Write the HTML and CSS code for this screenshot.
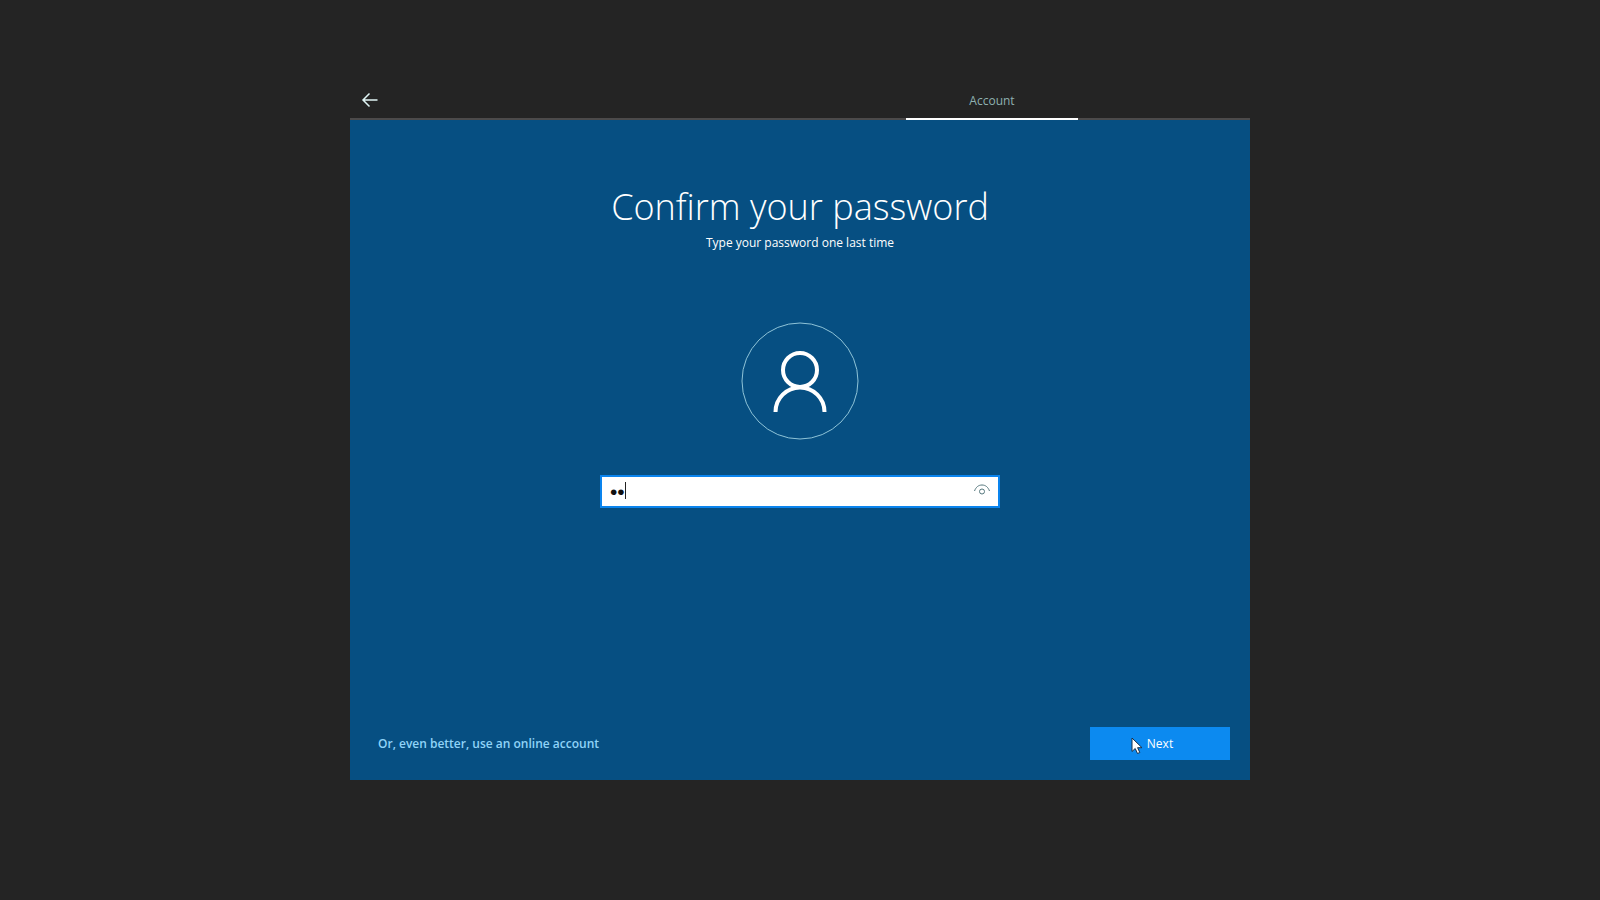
FILE: index.html
```
<!DOCTYPE html>
<html lang="en">
<head>
  <meta charset="utf-8">
  <title>Confirm your password</title>
  <link rel="stylesheet" href="styles.css">
</head>
<body>
  <div class="setup">
    <header class="topbar">
      <button class="back" type="button" aria-label="Back">
        <svg width="18" height="16" viewBox="0 0 18 16" fill="none" stroke="currentColor" stroke-width="1.5">
          <path d="M16.500 8H2M8.500 1.500L2 8l6.500 6.500"/>
        </svg>
      </button>
      <nav class="tabs">
        <a class="tab" href="#account">Account</a>
      </nav>
    </header>

    <form class="panel" id="account">
      <h1>Confirm your password</h1>
      <p class="subtitle">Type your password one last time</p>

      <svg class="avatar" width="118" height="118" viewBox="0 0 118 118" fill="none">
        <circle cx="59" cy="59" r="58" stroke="#8fc4d8"/>
        <circle cx="59" cy="48" r="17" stroke="#fff" stroke-width="4"/>
        <path d="M34.500 90a24.500 24.500 0 0 1 49 0" stroke="#fff" stroke-width="4"/>
      </svg>

      <div class="field">
        <input class="password" type="password" value="ab" aria-label="Confirm password">
        <span class="caret"></span>
        <button class="reveal" type="button" aria-label="Show password">
          <svg width="18" height="12" viewBox="0 0 18 12" fill="none" stroke="#55777d">
            <path d="M1.500 7C3 3 5.500 1 9 1s6 2 7.500 6"/>
            <circle cx="9" cy="7.500" r="2.500"/>
          </svg>
        </button>
      </div>

      <footer class="actions">
        <a class="online" href="#online">Or, even better, use an online account</a>
        <button class="next" type="button">
          Next
          <svg class="pointer" width="12" height="18" viewBox="0 0 12 18">
            <path d="M1 1v13.500l3.200-3 2.300 5 2.300-1-2.200-4.800H11z" fill="#fff" stroke="#183048"/>
          </svg>
        </button>
      </footer>
    </form>
  </div>
</body>
</html>
```

FILE: styles.css
```
* {
  box-sizing: border-box;
}
body {
  margin: 0;
  background: #242424;
  color: #fff;
  font-family: "Open Sans", "Noto Sans", sans-serif;
  font-size: 12px;
  line-height: 18px;
}
button {
  border: 0;
  padding: 0;
  font: inherit;
  color: inherit;
}
a {
  text-decoration: none;
}
.setup {
  display: flex;
  flex-direction: column;
  max-width: 900px;
  min-height: 100vh;
  margin: 0 auto;
  padding: 80px 0 120px;
}

/* top bar */
.topbar {
  display: flex;
  justify-content: space-between;
  height: 40px;
  border-bottom: 2px solid #4c4a4a;
}
.back {
  display: flex;
  align-items: center;
  justify-content: center;
  width: 40px;
  height: 40px;
  background: none;
  color: #dff4f4;
}
.tabs {
  display: flex;
  margin-right: 172px;
}
.tab {
  width: 172px;
  height: 40px;
  padding-top: 12px;
  border-bottom: 2px solid #fff;
  color: #8fb0b0;
  text-align: center;
}

/* blue page */
.panel {
  display: flex;
  flex: 1;
  flex-direction: column;
  align-items: center;
  padding: 60px 20px 20px;
  background: #064f82;
}
h1 {
  margin: 0;
  font-size: 36px;
  font-weight: 300;
  line-height: 54px;
}
.subtitle {
  margin: 0;
}
.avatar {
  margin: 70px 0 35px;
}
.field {
  position: relative;
  width: 400px;
  max-width: 100%;
}
.password {
  display: block;
  width: 100%;
  height: 33px;
  padding: 0 40px 0 8px;
  border: 2px solid #0a84ee;
  border-radius: 0;
  outline: 0;
  background: #fff;
  color: #111;
  font-family: "Liberation Sans", sans-serif;
  font-size: 21px;
}
.caret {
  position: absolute;
  top: 7px;
  left: 25px;
  width: 1px;
  height: 17px;
  background: #222;
}
.reveal {
  display: flex;
  align-items: center;
  justify-content: center;
  position: absolute;
  top: 1px;
  right: 3px;
  width: 30px;
  height: 28px;
  background: none;
}
.actions {
  display: flex;
  align-items: center;
  align-self: stretch;
  justify-content: space-between;
  margin-top: auto;
  padding-left: 8px;
}
.online {
  color: #8fd3f8;
  font-weight: 600;
}
.next {
  position: relative;
  width: 140px;
  height: 33px;
  background: #0c8af0;
}
.pointer {
  position: absolute;
  top: 10px;
  left: 41px;
}
```
